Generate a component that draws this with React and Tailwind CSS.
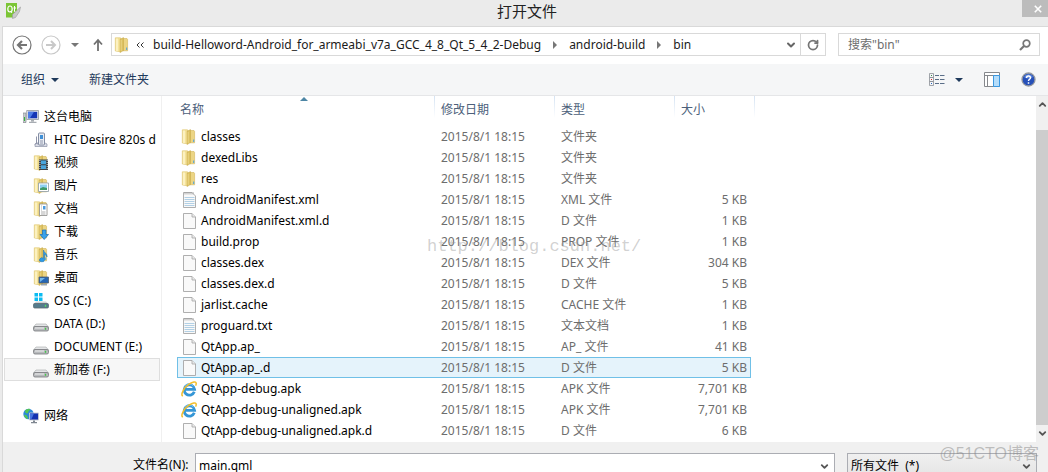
import { ChevronDown, ChevronUp, RotateCw } from "lucide-react"

const files = [
  { name: "classes", type: "文件夹", size: "", icon: "folder" },
  { name: "dexedLibs", type: "文件夹", size: "", icon: "folder" },
  { name: "res", type: "文件夹", size: "", icon: "folder" },
  { name: "AndroidManifest.xml", type: "XML 文件", size: "5 KB", icon: "text" },
  { name: "AndroidManifest.xml.d", type: "D 文件", size: "1 KB", icon: "file" },
  { name: "build.prop", type: "PROP 文件", size: "1 KB", icon: "file" },
  { name: "classes.dex", type: "DEX 文件", size: "304 KB", icon: "file" },
  { name: "classes.dex.d", type: "D 文件", size: "5 KB", icon: "file" },
  { name: "jarlist.cache", type: "CACHE 文件", size: "1 KB", icon: "file" },
  { name: "proguard.txt", type: "文本文档", size: "1 KB", icon: "text" },
  { name: "QtApp.ap_", type: "AP_ 文件", size: "41 KB", icon: "file" },
  { name: "QtApp.ap_.d", type: "D 文件", size: "5 KB", icon: "file", selected: true },
  { name: "QtApp-debug.apk", type: "APK 文件", size: "7,701 KB", icon: "ie" },
  { name: "QtApp-debug-unaligned.apk", type: "APK 文件", size: "7,701 KB", icon: "ie" },
  { name: "QtApp-debug-unaligned.apk.d", type: "D 文件", size: "6 KB", icon: "file" },
]

const places = [
  { name: "HTC Desire 820s d", icon: "phone" },
  { name: "视频", icon: "video" },
  { name: "图片", icon: "picture" },
  { name: "文档", icon: "document" },
  { name: "下载", icon: "download" },
  { name: "音乐", icon: "music" },
  { name: "桌面", icon: "desktop" },
  { name: "OS (C:)", icon: "system" },
  { name: "DATA (D:)", icon: "drive" },
  { name: "DOCUMENT (E:)", icon: "drive" },
  { name: "新加卷 (F:)", icon: "drive", selected: true },
]

function Svg({ children, className = "h-4 w-4" }) {
  return (
    <svg viewBox="0 0 16 16" className={`shrink-0 ${className}`} aria-hidden="true">
      {children}
    </svg>
  )
}

function FolderShape() {
  return (
    <>
      <path d="M1.300 .8h5.200v14L1.300 14z" fill="#f5e39a" stroke="#dcc26a" strokeWidth=".6" />
      <path d="M9 1.500h4l.6 1v11.300H9z" fill="#ecd584" stroke="#d2b65c" strokeWidth=".6" />
      <path d="M6 2.200 9.500 .6v13L6 15.500z" fill="#dcc161" stroke="#c8aa4a" strokeWidth=".5" />
      <path d="M3 1.500v12.500" stroke="#fff7d2" strokeWidth="1.400" />
      <path d="M7.200 2.800v11" stroke="#efdc92" strokeWidth=".8" />
      <path d="M12.700 10.500v2.500" stroke="#4aa3df" strokeWidth="1" />
    </>
  )
}

function DriveShape() {
  return (
    <>
      <path d="M3 8h10l2.500 3H.5z" fill="#e4e5e7" stroke="#a5a7aa" strokeWidth=".6" />
      <rect x=".5" y="10.500" width="15" height="4.500" rx="1.500" fill="#b8babd" stroke="#77797c" strokeWidth=".8" />
      <path d="M2 12h9" stroke="#eceded" strokeWidth="1" />
      <path d="M12.500 11.800v2" stroke="#45c94a" strokeWidth="1.300" />
    </>
  )
}

function Icon({ name }) {
  switch (name) {
    case "folder":
      return <Svg><FolderShape /></Svg>
    case "file":
    case "text":
      return (
        <Svg>
          <path d="M2.500 .5h8.500l3.500 3.500v11.500h-12z" fill="#f9f9f9" stroke="#a6a6a6" strokeWidth=".9" />
          {name === "file" ? (
            <path d="M11 .5V4h3.500" fill="#e9e9e9" stroke="#a6a6a6" strokeWidth=".8" />
          ) : (
            <>
              <path d="M3.500 5.500h10M3.500 7.500h10M3.500 9.500h10M3.500 11.500h10M3.500 13.500h10" stroke="#a9cbe2" strokeWidth=".9" />
              <path d="M4 0v2.500M6 0v2.500M8 0v2.500M10 0v2.500M12 0v2.500" stroke="#9a9a9a" strokeWidth=".8" />
            </>
          )}
        </Svg>
      )
    case "ie":
      return (
        <Svg>
          <path d="M13.300 10.800A5.200 5.200 0 1 1 13.600 8.400H4.500" fill="none" stroke="#3596d6" strokeWidth="2.800" />
          <path d="M12.200 5.200A4.800 4.800 0 0 0 4 5.500" fill="none" stroke="#86cdf2" strokeWidth="1" />
          <path d="M1.800 15.200C-.8 13.500 3 6.500 8 3.200c3.500-2.300 7-3.300 7.200-.8 0 .8-.2 1.500-.6 2.200" fill="none" stroke="#f2bd2a" strokeWidth="1.500" />
        </Svg>
      )
    case "phone":
      return (
        <Svg>
          <path d="M2 12c3-2 9-2 12 0v2.500H2z" fill="#d9dce6" stroke="#8e93a8" strokeWidth=".7" />
          <rect x="5.500" y="1" width="6" height="12" rx="1" fill="#e9edf3" stroke="#78829a" strokeWidth=".9" />
          <path d="M7 3h3v4H7z" fill="#3f8fd6" />
          <path d="M7 9h3M7 11h3" stroke="#78829a" strokeWidth=".8" />
          <path d="M3.500 4.500v7M2 12.500c0-1.500 3-1.500 3 0" fill="none" stroke="#8e93a8" />
        </Svg>
      )
    case "video":
      return (
        <Svg>
          <FolderShape />
          <path d="M6 4.500h9V15H6z" fill="#3d4247" />
          <path d="M8 5.500h5v3.800H8zM8 10.200h5V14H8z" fill="#4aa5dd" />
          <path d="M6.900 5v10M14.200 5v10" stroke="#fff" strokeWidth=".8" strokeDasharray="1 1" />
        </Svg>
      )
    case "picture":
      return (
        <Svg>
          <FolderShape />
          <path d="M5.500 5h10v8.500h-10z" fill="#fff" stroke="#8c9aa5" strokeWidth=".8" />
          <path d="M7 6.500h7V12H7z" fill="#8fd0f2" />
          <path d="M7 10.500 10 9l4 1v2H7z" fill="#3f9a6a" />
        </Svg>
      )
    case "document":
      return (
        <Svg>
          <FolderShape />
          <path d="M6.500 3H14v11.500H6.500z" fill="#fff" stroke="#8c8c8c" strokeWidth=".8" />
          <path d="M8 5h1M8 7h1M8 9h1M8 11h4.500M8 13h4.500" stroke="#9a9a9a" strokeWidth=".8" />
          <path d="M10 5h2.500v3.500H10z" fill="#4a9ae0" />
        </Svg>
      )
    case "download":
      return (
        <Svg>
          <FolderShape />
          <path d="M9.500 6h3.500v4.500h2.500L11.200 15.500 7 10.500h2.500z" fill="#3aa2ea" stroke="#1a6eb5" strokeWidth=".7" />
        </Svg>
      )
    case "music":
      return (
        <Svg>
          <FolderShape />
          <path d="M10.500 3c.5 3 4 3 3.500 7-.5-2-2-2.500-2.500-2.500V13a2.500 2 0 1 1-1-1.800z" fill="#2d9be8" stroke="#176cb0" strokeWidth=".5" />
        </Svg>
      )
    case "desktop":
      return (
        <Svg>
          <FolderShape />
          <path d="M6 7h9.500v6H6z" fill="#2667b5" stroke="#53616f" strokeWidth=".8" />
          <path d="M7 8h5L7 12z" fill="#74b7ea" />
          <path d="M8 14.800h6" stroke="#8793a0" strokeWidth="1.200" />
        </Svg>
      )
    case "system":
      return (
        <Svg>
          <path d="M3 8.500h10l2.500 2.500H.5z" fill="#cfd3d6" />
          <path d="M1.500 0H5v3.500H1.500zM6 0h3.500v3.500H6zM1.500 4.500H5V8H1.500zM6 4.500h3.500V8H6z" fill="#0cbcf2" />
          <rect x=".5" y="10.500" width="15" height="4.500" rx="1.200" fill="#557c8c" stroke="#5a6a72" strokeWidth=".8" />
          <path d="M12.500 11.800v2" stroke="#58e05d" strokeWidth="1.300" />
        </Svg>
      )
    case "drive":
      return <Svg><DriveShape /></Svg>
    case "computer":
      return (
        <Svg>
          <path d="M0 4h3v9.500H0z" fill="#c9ccd0" stroke="#85898f" strokeWidth=".7" />
          <path d="M1.500 8v4" stroke="#35b53c" />
          <path d="M3.700 1.500h11.800v9H3.700z" fill="#e3e5e8" stroke="#92979e" strokeWidth=".8" />
          <path d="M5 2.800h9.200v6.500H5z" fill="#1535b5" />
          <path d="M5 2.800h6L7 9.300H5z" fill="#4d7ce6" />
          <path d="M8 11h3v1.500H8zM6 12.800h7.500v1.200H6z" fill="#a8adb3" />
        </Svg>
      )
    case "network":
      return (
        <Svg>
          <circle cx="5.500" cy="6" r="5.200" fill="#2b88d8" />
          <path d="M2 3c1-2 4-2.500 5-2 0 2-2 2-2 4-1 1-3 0-3-2zM1 7c2-1 4 1 4 4-2 0-3.500-2-4-4z" fill="#53c653" />
          <path d="M6.500 5h9v7h-9z" fill="#1432b0" stroke="#c8ccd2" strokeWidth=".9" />
          <path d="M7 5.500h4L8.500 11H7z" fill="#4574e0" />
          <path d="M10 12.500h2V14h-2zM8 14h6v1.200H8z" fill="#7f8791" />
        </Svg>
      )
    default:
      return null
  }
}

function TitleBar() {
  return (
    <header className="flex h-[26px] items-start bg-[#ebebeb]">
      <div className="w-8 pt-[3px] pl-[5px]">
        <svg viewBox="0 0 16 16" className="h-4 w-4" aria-hidden="true">
          <path d="M1 0h11v9l-4 5.500H1z" fill="#7cc536" />
          <ellipse cx="5" cy="6" rx="2.200" ry="3" fill="none" stroke="#fff" strokeWidth="1.200" />
          <path d="m5.500 8 1.500 2M9.500 3v5.500h1M8.500 5h2.500" fill="none" stroke="#fff" />
          <path d="M15.500 4 7.500 11.500v4l3-1 4-6z" fill="#c9c9c9" stroke="#9b9b9b" strokeWidth=".6" />
        </svg>
      </div>
      <h1 className="flex-1 text-center text-[15px] leading-[22px] text-[#222]">打开文件</h1>
      <button aria-label="关闭" className="flex h-[17px] w-[26px] items-center justify-center bg-[#bcbcbc] pl-[6px]">
        <svg viewBox="0 0 8 8" className="h-2 w-2">
          <path d="m.8 .8 6.400 6.400M7.200 .8.8 7.200" stroke="#fff" strokeWidth="1.600" />
        </svg>
      </button>
    </header>
  )
}

function CircleArrow({ label, forward }) {
  return (
    <button aria-label={label} className={forward ? "text-[#c8c8c8]" : "text-[#757575]"}>
      <svg viewBox="0 0 20 20" className="h-5 w-5" fill="none" stroke="currentColor">
        <circle cx="10" cy="10" r="9" strokeWidth="1.200" />
        {forward ? (
          <path d="M5 10h9M10 6l4 4-4 4" strokeWidth="2" />
        ) : (
          <path d="M15 10H6M10 6l-4 4 4 4" strokeWidth="2.200" />
        )}
      </svg>
    </button>
  )
}

function Crumb({ children }) {
  return (
    <a href="#" className="whitespace-nowrap">
      {children}
    </a>
  )
}

function CrumbArrow() {
  return (
    <svg viewBox="0 0 4 8" className="h-2 w-1 shrink-0" aria-hidden="true">
      <path d="m0 0 4 4-4 4z" fill="#777" />
    </svg>
  )
}

function AddressRow() {
  return (
    <nav className="flex items-center bg-white pt-[6px] pr-2 pb-2 pl-[9px]">
      <CircleArrow label="后退" />
      <div className="w-[9px]" />
      <CircleArrow label="前进" forward />
      <button aria-label="最近位置" className="ml-[10px]">
        <svg viewBox="0 0 8 4" className="h-1 w-2">
          <path d="M0 0h8L4 4z" fill="#777" />
        </svg>
      </button>
      <button aria-label="向上" className="ml-[13px]">
        <svg viewBox="0 0 12 14" className="h-[14px] w-3">
          <path d="M6 13V2.500M2 6.500l4-4.500 4 4.500" fill="none" stroke="#707070" strokeWidth="1.800" />
        </svg>
      </button>
      <div className="ml-[7px] flex h-[23px] min-w-0 flex-1 items-center border border-[#d9d9d9] text-[#1b1b1b]">
        <div className="flex min-w-0 flex-1 items-center pl-[2px]">
          <Icon name="folder" />
          <svg viewBox="0 0 8 6" className="ml-[6px] h-[6px] w-2 shrink-0" aria-hidden="true">
            <path d="M3.500 .5 1 3l2.500 2.500M7.500 .5 5 3l2.500 2.500" fill="none" stroke="#333" />
          </svg>
          <div className="ml-[9px] flex items-center gap-3">
            <Crumb>build-Helloword-Android_for_armeabi_v7a_GCC_4_8_Qt_5_4_2-Debug</Crumb>
            <CrumbArrow />
            <Crumb>android-build</Crumb>
            <CrumbArrow />
            <Crumb>bin</Crumb>
          </div>
        </div>
        <button aria-label="以前的位置" className="flex w-[18px] items-center justify-center">
          <ChevronDown size={12} strokeWidth={4} color="#666" />
        </button>
        <button aria-label="刷新" className="flex h-full w-[25px] items-center justify-center border-l border-[#d9d9d9]">
          <RotateCw size={12} strokeWidth={3.5} color="#757575" />
        </button>
      </div>
      <div className="ml-3 flex h-[23px] w-[202px] items-center border border-[#d9d9d9] pr-2 pl-[9px]">
        <input
          type="text"
          aria-label="搜索"
          placeholder='搜索"bin"'
          className="min-w-0 flex-1 outline-none placeholder:text-[#6d6d6d]"
        />
        <svg viewBox="0 0 12 12" className="h-3 w-3 shrink-0" fill="none" stroke="#777" aria-hidden="true">
          <circle cx="7.500" cy="4.500" r="3.300" strokeWidth="1.700" />
          <path d="M5 7 1 11" strokeWidth="2.200" />
        </svg>
      </div>
    </nav>
  )
}

function Toolbar() {
  return (
    <div className="flex h-8 items-center border-b border-[#e5e6e8] bg-[#f5f6f7] pr-3 pl-[18px] text-[#1e395b]">
      <button className="flex items-center gap-[6px]">
        组织
        <svg viewBox="0 0 8 4" className="h-1 w-2">
          <path d="M0 0h8L4 4z" fill="#1e395b" />
        </svg>
      </button>
      <button className="ml-[30px]">新建文件夹</button>
      <div className="flex-1" />
      <button aria-label="更改视图" className="flex items-center gap-[10px]">
        <svg viewBox="0 0 16 14" className="h-[14px] w-4" fill="none">
          <path d="M.5 .5h4v4h-4zM.5 4.500h4v4h-4zM.5 8.500h4v4h-4z" stroke="#8a8f96" strokeWidth=".8" />
          <path d="M2 2h1v1H2z" fill="#3d8a4a" />
          <path d="M2 6h1v1H2z" fill="#d22" />
          <path d="M2 10h1v1H2z" fill="#2563c0" />
          <path d="M6 2.500h4M11 2.500h4.500M6 6.500h4M11 6.500h4.500M6 10.500h4M11 10.500h4.500" stroke="#5a6e88" />
        </svg>
        <svg viewBox="0 0 8 4" className="h-1 w-2">
          <path d="M0 0h8L4 4z" fill="#1e395b" />
        </svg>
      </button>
      <button aria-label="预览窗格" className="ml-[21px]">
        <svg viewBox="0 0 16 15" className="h-[15px] w-4" fill="#fff">
          <path d="M.5 .5h15v14H.5z" stroke="#85888c" />
          <path d="M.5 3.500h15M3.500 3.500v11" stroke="#85888c" />
          <path d="M9.500 3.500h6v11h-6z" fill="#b5ddfa" stroke="#3c98e0" />
        </svg>
      </button>
      <button aria-label="帮助" className="ml-[21px]">
        <svg viewBox="0 0 15 15" className="h-[15px] w-[15px]">
          <circle cx="7.500" cy="7.500" r="6.500" fill="#2650b8" stroke="#93979e" strokeWidth="1.300" />
          <path d="M3 5a5 5 0 0 1 9 0c-3 2-6 2-9 0z" fill="#5d86dc" />
          <path d="M5.500 6c0-3 4.200-2.600 4 0-.2 1.300-2 1.300-2 3M7.500 10.200v1.500" fill="none" stroke="#fff" strokeWidth="1.500" />
        </svg>
      </button>
    </div>
  )
}

function Sidebar() {
  return (
    <aside className="w-[159px] shrink-0 overflow-hidden border-r border-[#f0f0f0] bg-white pt-[9px] pr-px pl-px text-black">
      <a href="#" className="flex h-[23px] items-center gap-[5px] pl-[19px]">
        <Icon name="computer" />
        这台电脑
      </a>
      <ul>
        {places.map((place) => (
          <li key={place.name}>
            <a
              href="#"
              className={`flex h-[23px] items-center gap-[5px] border pl-7 whitespace-nowrap ${
                place.selected ? "border-[#dedede] bg-[#f7f7f7]" : "border-transparent"
              }`}
            >
              <Icon name={place.icon} />
              {place.name}
            </a>
          </li>
        ))}
      </ul>
      <a href="#" className="mt-[23px] flex h-[23px] items-center gap-[5px] pl-[19px]">
        <Icon name="network" />
        网络
      </a>
    </aside>
  )
}

function HeaderCell({ children, colSpan, inset = "pl-[6px]" }) {
  return (
    <th colSpan={colSpan} className="p-0 text-left align-top font-normal">
      <div className="flex h-[22px] justify-between">
        <span className={`pt-[6px] ${inset}`}>{children}</span>
        <span className="w-px bg-linear-to-b from-[#d5e3f3] to-white" />
      </div>
    </th>
  )
}

function FileTable() {
  return (
    <main className="relative min-w-0 flex-1 overflow-hidden bg-white pl-[15px]">
      <svg viewBox="0 0 8 4" className="absolute top-px left-[138px] h-1 w-2" aria-hidden="true">
        <path d="M4 0l4 4H0z" fill="#4d86a5" />
      </svg>
      <table className="w-[578px] table-fixed border-separate border-spacing-0 text-[#6d6d6d]">
        <colgroup>
          <col className="w-[258px]" />
          <col className="w-[120px]" />
          <col className="w-[120px]" />
          <col className="w-[76px]" />
          <col className="w-1" />
        </colgroup>
        <thead>
          <tr className="h-[30px] text-[#4c607a]">
            <HeaderCell inset="pl-[3px]">名称</HeaderCell>
            <HeaderCell>修改日期</HeaderCell>
            <HeaderCell>类型</HeaderCell>
            <HeaderCell colSpan={2}>大小</HeaderCell>
          </tr>
        </thead>
        <tbody>
          {files.map((file) => {
            const cell = file.selected
              ? "h-[21px] border-y border-[#70c0e7] bg-[#e5f3fb] py-0"
              : "h-[21px] border-y border-transparent py-0"
            return (
              <tr key={file.name} aria-selected={Boolean(file.selected)}>
                <td className={`${cell} border-l pl-[3px]`}>
                  <div className="flex items-center gap-1 text-black">
                    <Icon name={file.icon} />
                    {file.name}
                  </div>
                </td>
                <td className={`${cell} pl-[6px]`}>2015/8/1 18:15</td>
                <td className={`${cell} pl-[6px]`}>{file.type}</td>
                <td className={`${cell} border-r pr-[3px] text-right`}>{file.size}</td>
              </tr>
            )
          })}
        </tbody>
      </table>
      <div className="pointer-events-none absolute top-[139px] left-[265px] font-['Liberation_Mono',monospace] text-[17px] leading-6 text-[#999]/45">
        http://blog.csdn.net/
      </div>
    </main>
  )
}

function ScrollBar() {
  return (
    <div className="flex w-3 shrink-0 flex-col bg-[#f0f0f0]">
      <button aria-label="向上滚动" className="flex h-[34px] justify-end pt-[3px]">
        <ChevronUp size={11} strokeWidth={4} color="#555" />
      </button>
      <div className="flex-1 bg-[#cdcdcd]" />
      <button aria-label="向下滚动" className="flex h-[17px] justify-end pt-[3px]">
        <ChevronDown size={11} strokeWidth={4} color="#555" />
      </button>
    </div>
  )
}

function Footer() {
  return (
    <footer className="relative flex h-[30px] shrink-0 items-start overflow-hidden bg-[#f0f0f0] pt-[11px] pr-[11px] pl-[130px] text-black">
      <label htmlFor="filename" className="w-[62px] pt-1 whitespace-nowrap">
        文件名(N):
      </label>
      <div className="flex h-[26px] min-w-0 flex-1 items-center border border-[#abadb3] bg-white pr-1 pl-[3px]">
        <input id="filename" type="text" defaultValue="main.qml" className="min-w-0 flex-1 outline-none" />
        <button aria-label="文件名列表">
          <ChevronDown size={11} strokeWidth={4} color="#555" />
        </button>
      </div>
      <div className="relative ml-3 w-[190px]">
        <select
          aria-label="文件类型"
          className="h-[26px] w-full appearance-none border border-[#abadb3] bg-linear-to-b from-[#f0f0f0] to-[#e4e4e4] pl-[3px] outline-none"
        >
          <option>所有文件{"\u00a0\u00a0"}(*)</option>
        </select>
        <ChevronDown size={11} strokeWidth={4} color="#555" className="pointer-events-none absolute top-2 right-[5px]" />
      </div>
      <span className="pointer-events-none absolute right-[9px] bottom-[6px] font-['Liberation_Sans','Noto_Sans_CJK_SC',sans-serif] text-[16px] leading-6 text-[#888]/50">
        @51CTO博客
      </span>
    </footer>
  )
}

export default function App() {
  return (
    <div className="flex h-screen flex-col overflow-hidden bg-[#ebebeb] font-['Noto_Sans','Noto_Sans_CJK_SC',sans-serif] text-[12px] leading-4">
      <TitleBar />
      <div className="ml-[2px] flex min-h-0 flex-1 flex-col border-t border-l border-[#d9d9d9]">
        <AddressRow />
        <Toolbar />
        <div className="flex min-h-0 flex-1">
          <Sidebar />
          <FileTable />
          <ScrollBar />
        </div>
        <Footer />
      </div>
    </div>
  )
}
